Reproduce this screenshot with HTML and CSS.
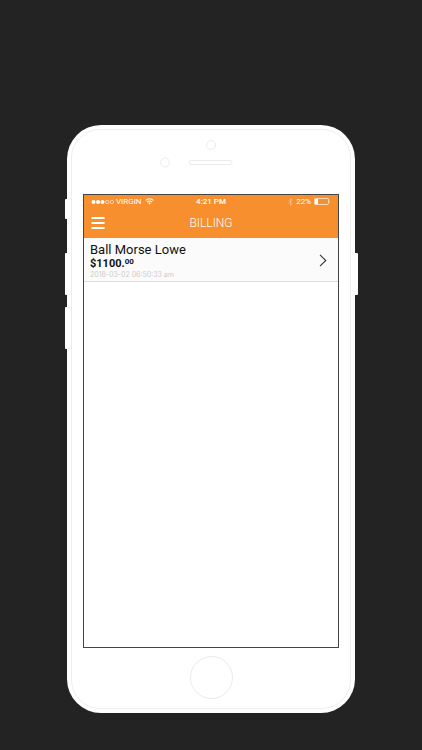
FILE: index.html
```html
<!DOCTYPE html>
<html lang="en">

<head>
    <meta charset="UTF-8">
    <meta name="viewport" content="width=device-width, initial-scale=1.0">
    <title>Billing</title>
    <link rel="stylesheet" href="styles.css">
</head>

<body>
    <div class="phone">
        <span class="side-btn mute"></span>
        <span class="side-btn volume-up"></span>
        <span class="side-btn volume-down"></span>
        <span class="side-btn power"></span>

        <div class="phone-top">
            <svg width="104" height="69" viewBox="0 0 104 69" fill="none" stroke="#ebebeb">
                <circle cx="52" cy="20" r="4.5" />
                <circle cx="6" cy="37.5" r="4.5" />
                <rect x="30" y="35.5" width="43" height="4" rx="2" />
            </svg>
        </div>

        <div class="screen">
            <header>
                <div class="status-bar">
                    <div class="carrier">
                        <svg width="24" height="6" viewBox="0 0 24 6">
                            <g fill="#fff">
                                <circle cx="2.5" cy="3" r="2" />
                                <circle cx="7" cy="3" r="2" />
                                <circle cx="11.5" cy="3" r="2" />
                            </g>
                            <g fill="none" stroke="#fff" stroke-width=".6">
                                <circle cx="16.2" cy="3" r="1.7" />
                                <circle cx="20.8" cy="3" r="1.7" />
                            </g>
                        </svg>
                        <span>VIRGIN</span>
                        <svg class="wifi" width="9" height="7" viewBox="0 0 9 7" fill="none" stroke="#fff" stroke-width="1.1">
                            <path d="M.6 2.4Q4.5-.9 8.4 2.4M2 4Q4.5 2 7 4" />
                            <path d="M3.1 5.1Q4.5 4 5.9 5.1L4.5 6.6Z" fill="#fff" stroke="none" />
                        </svg>
                    </div>
                    <span class="time">4:21 PM</span>
                    <div class="battery">
                        <svg width="5" height="8" viewBox="0 0 5 8" fill="none" stroke="#fbc995" stroke-width=".7">
                            <path d="M.6 2.2L4.2 5.8L2.5 7.5V.5L4.2 2.2L.6 5.8" />
                        </svg>
                        <span>22%</span>
                        <svg width="17" height="7" viewBox="0 0 17 7">
                            <rect x=".5" y=".5" width="14" height="6" rx="1" fill="none" stroke="#fff" stroke-width=".7" />
                            <rect x="1" y="1" width="3" height="5" fill="#fff" />
                            <path d="M15.4 2.3Q16.5 3.5 15.4 4.7Z" fill="#fff" />
                        </svg>
                    </div>
                </div>
                <div class="nav-bar">
                    <button class="menu-btn" type="button" aria-label="Menu">
                        <svg width="14" height="14" viewBox="0 0 14 14" fill="none" stroke="#fff" stroke-width="2" stroke-linecap="round">
                            <path d="M1.2 2H12.8M1.2 7H12.8M1.2 12H12.8" />
                        </svg>
                    </button>
                    <h1>BILLING</h1>
                </div>
            </header>

            <a class="bill" href="#">
                <div class="bill-info">
                    <p class="name">Ball Morse Lowe</p>
                    <p class="amount">$1100.<sup>00</sup></p>
                    <p class="date">2018-03-02 06:50:33 am</p>
                </div>
                <svg width="8" height="13" viewBox="0 0 8 13" fill="none" stroke="#333" stroke-width="1.1">
                    <path d="M1 .9L6.8 6.5L1 12.1" />
                </svg>
            </a>
        </div>

        <div class="phone-bottom">
            <button class="home-btn" type="button" aria-label="Home"></button>
        </div>
    </div>
</body>

</html>
```
FILE: styles.css
```css
* {
    box-sizing: border-box;
}

body {
    display: flex;
    justify-content: center;
    align-items: flex-start;
    min-height: 100vh;
    margin: 0;
    padding: 125px 16px 36px;
    background-color: #232323;
    font-family: "Roboto", sans-serif;
}

h1,
p {
    margin: 0;
    font-weight: normal;
}

svg {
    display: block;
    flex: none;
}

button {
    padding: 0;
    border: none;
    background: none;
    cursor: pointer;
}

.phone {
    position: relative;
    width: 100%;
    max-width: 288px;
    padding: 0 16px;
    border-radius: 34px;
    background-color: white;
}

/* thin line inside the phone edge */
.phone::before {
    content: "";
    position: absolute;
    inset: 4px;
    border: 1px solid #eee;
    border-radius: 29px;
    pointer-events: none;
}

.side-btn {
    position: absolute;
    left: -2px;
    width: 2px;
    height: 42px;
    border-radius: 1px 0 0 1px;
    background-color: white;
}

.mute {
    top: 74px;
    height: 20px;
}

.volume-up {
    top: 128px;
}

.volume-down {
    top: 182px;
}

.power {
    top: 128px;
    left: auto;
    right: -3px;
    width: 3px;
    border-radius: 0 1px 1px 0;
}

.phone-top {
    display: flex;
    justify-content: center;
}

.screen {
    min-height: 454px;
    border: 1px solid #444;
    background-color: white;
}

header {
    background-color: #f78f2e;
    color: white;
}

.status-bar {
    display: grid;
    grid-template-columns: 1fr auto 1fr;
    align-items: center;
    height: 13px;
    padding: 0 7px;
    font-size: 8px;
    line-height: 8px;
}

.carrier,
.battery {
    display: flex;
    align-items: center;
}

.carrier {
    gap: 1px;
}

.wifi {
    margin-left: 2px;
}

.time {
    font-weight: 500;
}

.battery {
    gap: 3px;
    justify-content: flex-end;
}

.nav-bar {
    display: grid;
    grid-template-columns: 1fr auto 1fr;
    align-items: center;
    height: 30px;
    padding: 0 7px;
}

h1 {
    font-size: 12px;
    font-weight: 300;
    line-height: 14px;
}

.bill {
    display: flex;
    justify-content: space-between;
    align-items: center;
    height: 44px;
    padding: 2px 11px 0 6px;
    border-bottom: 1px solid #ddd;
    background-color: #fbfbfb;
    color: #111;
    text-decoration: none;
}

.name {
    font-size: 13px;
    line-height: 14px;
}

.amount {
    display: flex;
    font-size: 11px;
    font-weight: bold;
    line-height: 13px;
}

.amount sup {
    font-size: 8px;
    line-height: 10px;
    vertical-align: top;
}

.date {
    color: #ccc;
    font-family: "Inter", sans-serif;
    font-size: 7px;
    line-height: 9px;
}

.phone-bottom {
    display: flex;
    justify-content: center;
    align-items: center;
    height: 65px;
    padding-bottom: 6px;
}

.home-btn {
    width: 43px;
    height: 43px;
    border: 1px solid #ebebeb;
    border-radius: 50%;
}
```
